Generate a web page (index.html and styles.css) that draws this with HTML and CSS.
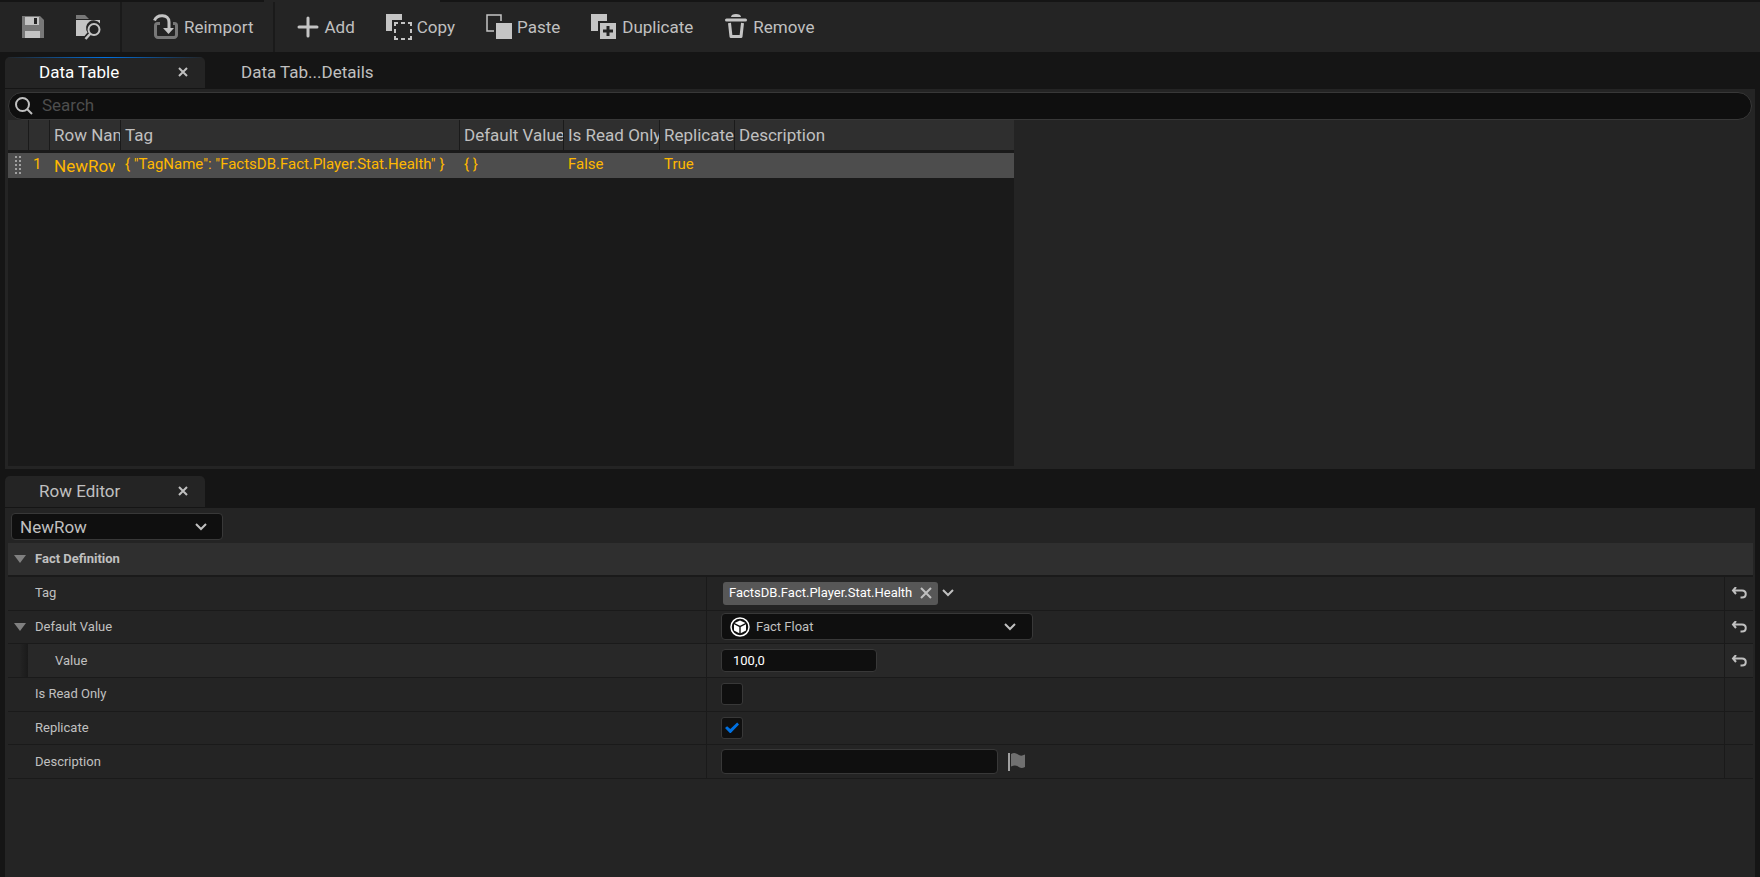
FILE: index.html
```html
<!DOCTYPE html>
<html lang="en">
  <head>
    <meta charset="UTF-8" />
    <meta name="viewport" content="width=device-width, initial-scale=1.0" />
    <title>Data Table</title>
    <link rel="stylesheet" href="styles.css">
  </head>
  <body>
    <header class="toolbar">
      <div class="tool-group file">
        <button class="tool" aria-label="Save">
          <svg width="24" height="24" viewBox="0 0 24 24">
            <path fill="#787878" d="M1 1h18l4 4v18H1z" />
            <path fill="#c4c4c4" d="M4 2h14v8H4zM4 16h15v7H4z" />
            <path fill="#242424" d="M13 3h3v6h-3z" />
          </svg>
        </button>
        <button class="tool" aria-label="Browse to asset">
          <svg width="26" height="26" viewBox="0 0 26 26">
            <path fill="#787878" d="M1 5V1h9l4 4z" />
            <path fill="#c4c4c4" d="M1 6h24v3.5a7.5 7.500 0 0 0-12.5 9L9.500 22H1z" />
            <circle cx="19" cy="15.5" r="5.5" fill="none" stroke="#c4c4c4" stroke-width="2" />
            <path stroke="#c4c4c4" stroke-width="2.5" d="m15.500 19.500-5 5.500" />
          </svg>
        </button>
      </div>
      <div class="tool-group reimport">
        <button class="tool">
          <svg width="26" height="26" viewBox="0 0 26 26" fill="none">
            <path stroke="#787878" stroke-width="3" d="M7 9.500H4.500a2 2 0 0 0-2 2V21a2.500 2.500 0 0 0 2.500 2.500h16a2.500 2.500 0 0 0 2.500-2.500v-9.500a2 2 0 0 0-2-2H20" />
            <path stroke="#c4c4c4" stroke-width="3" d="M1.500 6.500C4 0 16 0 16 8v7" />
            <path fill="#c4c4c4" d="M10 14h11l-5.500 6z" />
          </svg>
          Reimport
        </button>
      </div>
      <div class="tool-group edit">
        <button class="tool">
          <svg width="24" height="22" viewBox="0 0 24 22">
            <path stroke="#c4c4c4" stroke-width="3" stroke-linecap="round" d="M12 2v18M3 11h18" />
          </svg>
          Add
        </button>
        <button class="tool">
          <svg width="26" height="26" viewBox="0 0 26 26">
            <path fill="#c4c4c4" d="M0 0h16v6H6v11H0z" />
            <path fill="none" stroke="#c4c4c4" stroke-width="2" d="M9 12V9h3M15 9h4M22 9h3v3M25 15v4M25 22v3h-3M19 25h-4M12 25H9v-3M9 19v-4" />
          </svg>
          Copy
        </button>
        <button class="tool">
          <svg width="26" height="26" viewBox="0 0 26 26">
            <path fill="none" stroke="#c4c4c4" stroke-width="1.5" d="M8 17H1V1h14v6" />
            <path fill="#c4c4c4" d="M10 9h16v16H10z" />
          </svg>
          Paste
        </button>
        <button class="tool">
          <svg width="26" height="26" viewBox="0 0 26 26">
            <path fill="#c4c4c4" d="M0 0h16v7H7v10H0z" />
            <path fill="#c4c4c4" d="M9 9h16v16H9z" />
            <path stroke="#242424" stroke-width="3" d="M17 12v10M12 17h10" />
          </svg>
          Duplicate
        </button>
        <button class="tool">
          <svg width="24" height="26" viewBox="0 0 24 26">
            <path fill="#c4c4c4" d="M7 3c0-2 2-3 5-3s5 1 5 3z" />
            <path stroke="#c4c4c4" stroke-width="3" stroke-linecap="round" d="M2.500 6h19" />
            <path fill="none" stroke="#c4c4c4" stroke-width="3" stroke-linejoin="round" d="M5.500 9 7 22.500h10L18.500 9" />
          </svg>
          Remove
        </button>
      </div>
    </header>

    <nav class="tabs">
      <div class="tab active">
        <span>Data Table</span>
        <button class="tab-close" aria-label="Close Data Table">
          <svg width="10" height="10" viewBox="0 0 10 10"><path d="m1 1 8 8M9 1 1 9" /></svg>
        </button>
      </div>
      <div class="tab inactive"><span>Data Tab...Details</span></div>
    </nav>

    <main class="panel data-panel">
      <label class="search">
        <svg width="18" height="18" viewBox="0 0 18 18">
          <circle cx="7.5" cy="7.5" r="6.5" />
          <path d="m12 12 5 5" />
        </svg>
        <input type="search" placeholder="Search" aria-label="Search">
      </label>
      <div class="table-area">
        <table class="data-table">
          <colgroup>
            <col class="col-grip">
            <col class="col-index">
            <col class="col-name">
            <col class="col-tag">
            <col class="col-default">
            <col class="col-readonly">
            <col class="col-replicate">
            <col>
          </colgroup>
          <thead>
            <tr>
              <th></th>
              <th></th>
              <th>Row Name</th>
              <th>Tag</th>
              <th>Default Value</th>
              <th>Is Read Only</th>
              <th>Replicate</th>
              <th>Description</th>
            </tr>
          </thead>
          <tbody>
            <tr>
              <td class="grip">
                <svg width="6" height="22" viewBox="0 0 6 22"><path d="M1 1v20M5 1v20" /></svg>
              </td>
              <td class="index">1</td>
              <td class="name"><div>NewRow</div></td>
              <td>{ "TagName": "FactsDB.Fact.Player.Stat.Health" }</td>
              <td>{ }</td>
              <td>False</td>
              <td>True</td>
              <td></td>
            </tr>
          </tbody>
        </table>
      </div>
    </main>

    <nav class="tabs editor-tabs">
      <div class="tab">
        <span>Row Editor</span>
        <button class="tab-close" aria-label="Close Row Editor">
          <svg width="10" height="10" viewBox="0 0 10 10"><path d="m1 1 8 8M9 1 1 9" /></svg>
        </button>
      </div>
    </nav>

    <section class="panel editor-panel">
      <div class="select-box row-select">
        <select aria-label="Row">
          <option>NewRow</option>
        </select>
        <svg class="chevron" width="12" height="8" viewBox="0 0 12 8"><path d="m1 1 5 5 5-5" /></svg>
      </div>

      <h2 class="category">
        <button class="expander" aria-label="Collapse Fact Definition"></button>
        Fact Definition
      </h2>

      <div class="properties">
        <div class="property">
          <div class="property-name">Tag</div>
          <div class="property-value">
            <span class="tag-chip">
              FactsDB.Fact.Player.Stat.Health
              <button aria-label="Clear tag">
                <svg width="12" height="12" viewBox="0 0 12 12"><path d="m1 1 10 10M11 1 1 11" /></svg>
              </button>
            </span>
            <button class="tag-menu" aria-label="Choose tag">
              <svg class="chevron" width="12" height="8" viewBox="0 0 12 8"><path d="m1 1 5 5 5-5" /></svg>
            </button>
          </div>
          <div class="property-reset">
            <button aria-label="Reset Tag">
              <svg width="16" height="12" viewBox="0 0 16 12"><path d="M5 0 2 3.500 5 7M2 3.500h9c5 0 5 7 0 7H9.500" /></svg>
            </button>
          </div>
        </div>

        <div class="property">
          <div class="property-name">
            <button class="expander" aria-label="Collapse Default Value"></button>
            <label for="default-value">Default Value</label>
          </div>
          <div class="property-value">
            <div class="select-box type-select">
              <svg class="struct-icon" width="20" height="20" viewBox="0 0 20 20">
                <circle cx="10" cy="10" r="9" fill="none" stroke="#fff" stroke-width="1.5" />
                <path fill="#fff" d="m10 3.500 5.500 2.500L10 8.800 4.500 6zM4 7.200l5.300 2.700v6.300L4 13.500zM16 7.200l-5.300 2.700v6.300l5.300-2.700z" />
              </svg>
              <select id="default-value">
                <option>Fact Float</option>
              </select>
              <svg class="chevron" width="12" height="8" viewBox="0 0 12 8"><path d="m1 1 5 5 5-5" /></svg>
            </div>
          </div>
          <div class="property-reset">
            <button aria-label="Reset Default Value">
              <svg width="16" height="12" viewBox="0 0 16 12"><path d="M5 0 2 3.500 5 7M2 3.500h9c5 0 5 7 0 7H9.500" /></svg>
            </button>
          </div>
        </div>

        <div class="property child">
          <div class="property-name"><label for="value">Value</label></div>
          <div class="property-value">
            <input class="number-input" id="value" type="text" value="100,0">
          </div>
          <div class="property-reset">
            <button aria-label="Reset Value">
              <svg width="16" height="12" viewBox="0 0 16 12"><path d="M5 0 2 3.500 5 7M2 3.500h9c5 0 5 7 0 7H9.500" /></svg>
            </button>
          </div>
        </div>

        <div class="property">
          <div class="property-name"><label for="read-only">Is Read Only</label></div>
          <div class="property-value">
            <input class="checkbox" id="read-only" type="checkbox">
          </div>
          <div class="property-reset"></div>
        </div>

        <div class="property">
          <div class="property-name"><label for="replicate">Replicate</label></div>
          <div class="property-value">
            <input class="checkbox" id="replicate" type="checkbox" checked>
          </div>
          <div class="property-reset"></div>
        </div>

        <div class="property">
          <div class="property-name"><label for="description">Description</label></div>
          <div class="property-value">
            <input class="text-input" id="description" type="text">
            <button class="flag" aria-label="Localization">
              <svg width="18" height="20" viewBox="0 0 18 20">
                <path fill="#a0a0a0" d="M0 1h2v18H0z" />
                <path fill="#707070" d="M3 2c3-2 5-1 7 .5s4 1.500 7 0V15c-3 1.500-5 1-7-.5s-4-1.500-7 0z" />
              </svg>
            </button>
          </div>
          <div class="property-reset"></div>
        </div>
      </div>
    </section>
  </body>
</html>
```
FILE: styles.css
```css
* {
  box-sizing: border-box;
}

body {
  display: flex;
  flex-direction: column;
  min-height: 100vh;
  margin: 0;
  background: #151515;
  color: #c0c0c0;
  font-family: Roboto, "Liberation Sans", sans-serif;
  font-size: 17px;
  line-height: 20px;
}

button,
input,
select {
  margin: 0;
  padding: 0;
  border: 0;
  background: none;
  color: inherit;
  font: inherit;
}

button svg {
  display: block;
}

/* toolbar */
.toolbar {
  display: flex;
  height: 52px;
  padding-top: 2px;
  background: linear-gradient(90deg, #151515 15%, #242424 15% 25%, #151515 25%) top / 100% 2px no-repeat #242424;
}

.tool-group {
  display: flex;
  align-items: center;
  gap: 30px;
  padding: 0 19px 0 21px;
  border-right: 2px solid #1a1a1a;
}

.tool-group.reimport {
  padding-left: 31px;
}

.tool-group.edit {
  gap: 31px;
  border-right: 0;
}

.tool {
  display: flex;
  align-items: center;
  gap: 5px;
}

/* tabs */
.tabs {
  display: flex;
  padding: 5px 5px 1px;
}

.editor-tabs {
  padding-top: 7px;
}

.tab {
  display: flex;
  align-items: center;
  justify-content: space-between;
  width: 200px;
  height: 31px;
  padding: 0 17px 2px 34px;
  border-radius: 5px 5px 0 0;
  background: #242424;
}

.tab.active {
  background: linear-gradient(90deg, #242424, #0070e0 50%, #242424) top / 100% 1px no-repeat #242424;
  color: #fff;
}

.tab.inactive {
  width: auto;
  padding-left: 36px;
  background: none;
}

.tab-close svg {
  fill: none;
  stroke: #c0c0c0;
  stroke-width: 2;
}

/* data table */
.panel {
  margin: 0 5px;
  background: #242424;
}

.data-panel {
  height: 380px;
  padding: 3px;
}

.search {
  display: flex;
  align-items: center;
  gap: 9px;
  height: 28px;
  padding: 0 8px 0 6px;
  border: 1px solid #383838;
  border-radius: 14px;
  background: #0f0f0f;
}

.search svg {
  fill: none;
  stroke: #c0c0c0;
  stroke-width: 2;
}

.search input {
  flex: 1;
  padding-bottom: 2px;
  outline: 0;
}

.search input::placeholder {
  color: #4d4d4d;
  opacity: 1;
}

.table-area {
  width: 57.7%;
  height: 346px;
  background: #1a1a1a;
}

.data-table {
  width: 100%;
  table-layout: fixed;
  border-collapse: separate;
  border-spacing: 0;
}

.col-grip {
  width: 20px;
}

.col-index {
  width: 21px;
}

.col-name {
  width: 71px;
}

.col-tag {
  width: 339px;
}

.col-default {
  width: 104px;
}

.col-readonly {
  width: 96px;
}

.col-replicate {
  width: 75px;
}

.data-table th {
  height: 33px;
  padding: 0 0 0 4px;
  overflow: hidden;
  border-bottom: 3px solid #1a1a1a;
  border-left: 1px solid #1a1a1a;
  background: #2f2f2f;
  font-weight: 400;
  text-align: left;
  white-space: nowrap;
}

.data-table th:first-child {
  border-left: 0;
}

.data-table td {
  height: 25px;
  padding: 0 0 3px 5px;
  background: #4d4d4d;
  color: #ffb800;
  font-size: 15px;
  white-space: nowrap;
}

.data-table .grip {
  padding: 0 0 0 7px;
}

.grip svg {
  display: block;
  stroke: #a0a0a0;
  stroke-width: 2;
  stroke-dasharray: 2 2;
}

.data-table .name {
  padding-bottom: 0;
  font-size: 17px;
}

.name div {
  width: 61px;
  overflow: hidden;
}

/* row editor */
.editor-panel {
  flex: 1;
  padding: 5px 2px 0 3px;
}

.select-box {
  display: flex;
  align-items: center;
  height: 27px;
  border: 1px solid #383838;
  border-radius: 4px;
  background: #0f0f0f;
}

.select-box select {
  flex: 1;
  appearance: none;
}

.chevron {
  display: block;
  fill: none;
  stroke: #c0c0c0;
  stroke-width: 2;
}

.row-select {
  width: 212px;
  margin: 0 0 3px 3px;
  padding: 0 15px 0 8px;
}

.category {
  display: flex;
  align-items: center;
  gap: 9px;
  height: 34px;
  margin: 0;
  padding-left: 6px;
  border-bottom: 2px solid #1a1a1a;
  background: #2f2f2f;
  font-size: 13px;
  font-weight: 700;
}

.expander {
  width: 12px;
  height: 8px;
  background: #808080;
  clip-path: polygon(0 0, 100% 0, 50% 100%);
}

.properties {
  display: grid;
  grid-auto-rows: 1fr;
  height: 202px;
}

.property {
  display: grid;
  grid-template-columns: 40% 1fr 29px;
  border-bottom: 1px solid #1a1a1a;
  font-size: 13px;
}

.property-name {
  display: flex;
  align-items: center;
  gap: 9px;
  padding-left: 27px;
}

.property-name:has(.expander) {
  padding-left: 6px;
}

.child {
  background: #282828;
}

/* indent guide of nested rows */
.child .property-name {
  padding-left: 47px;
  background: linear-gradient(90deg, #242424 12px, #222 13px, #1a1a1a 20px, #282828 20px);
}

.property-value {
  display: flex;
  align-items: center;
  padding-left: 14px;
  border-left: 1px solid #1a1a1a;
}

.property-reset {
  display: grid;
  place-items: center;
  border-left: 1px solid #1a1a1a;
}

.property-reset svg {
  fill: none;
  stroke: #c0c0c0;
  stroke-width: 2;
}

.tag-chip {
  display: flex;
  align-items: center;
  gap: 8px;
  height: 23px;
  margin-left: 2px;
  padding: 0 6px;
  border-radius: 3px;
  background: #575757;
  color: #fff;
}

.tag-chip svg {
  stroke: #c0c0c0;
  stroke-width: 2;
}

.tag-menu {
  margin-left: 4px;
}

.type-select {
  width: 312px;
  padding: 0 16px 0 8px;
}

.struct-icon {
  margin-right: 6px;
}

.number-input,
.text-input {
  width: 156px;
  height: 23px;
  padding: 0 11px;
  border: 1px solid #383838;
  border-radius: 4px;
  background: #0f0f0f;
  color: #fff;
}

.text-input {
  width: 277px;
  height: 25px;
}

.checkbox {
  display: grid;
  place-items: center;
  width: 22px;
  height: 22px;
  border: 1px solid #383838;
  border-radius: 3px;
  background: #0f0f0f;
  appearance: none;
}

.checkbox:checked::before {
  width: 14px;
  height: 11px;
  background: #0070e0;
  clip-path: polygon(0 50%, 15% 35%, 38% 60%, 87% 0, 100% 18%, 38% 100%);
  content: "";
}

.flag {
  margin-left: 10px;
}
```
